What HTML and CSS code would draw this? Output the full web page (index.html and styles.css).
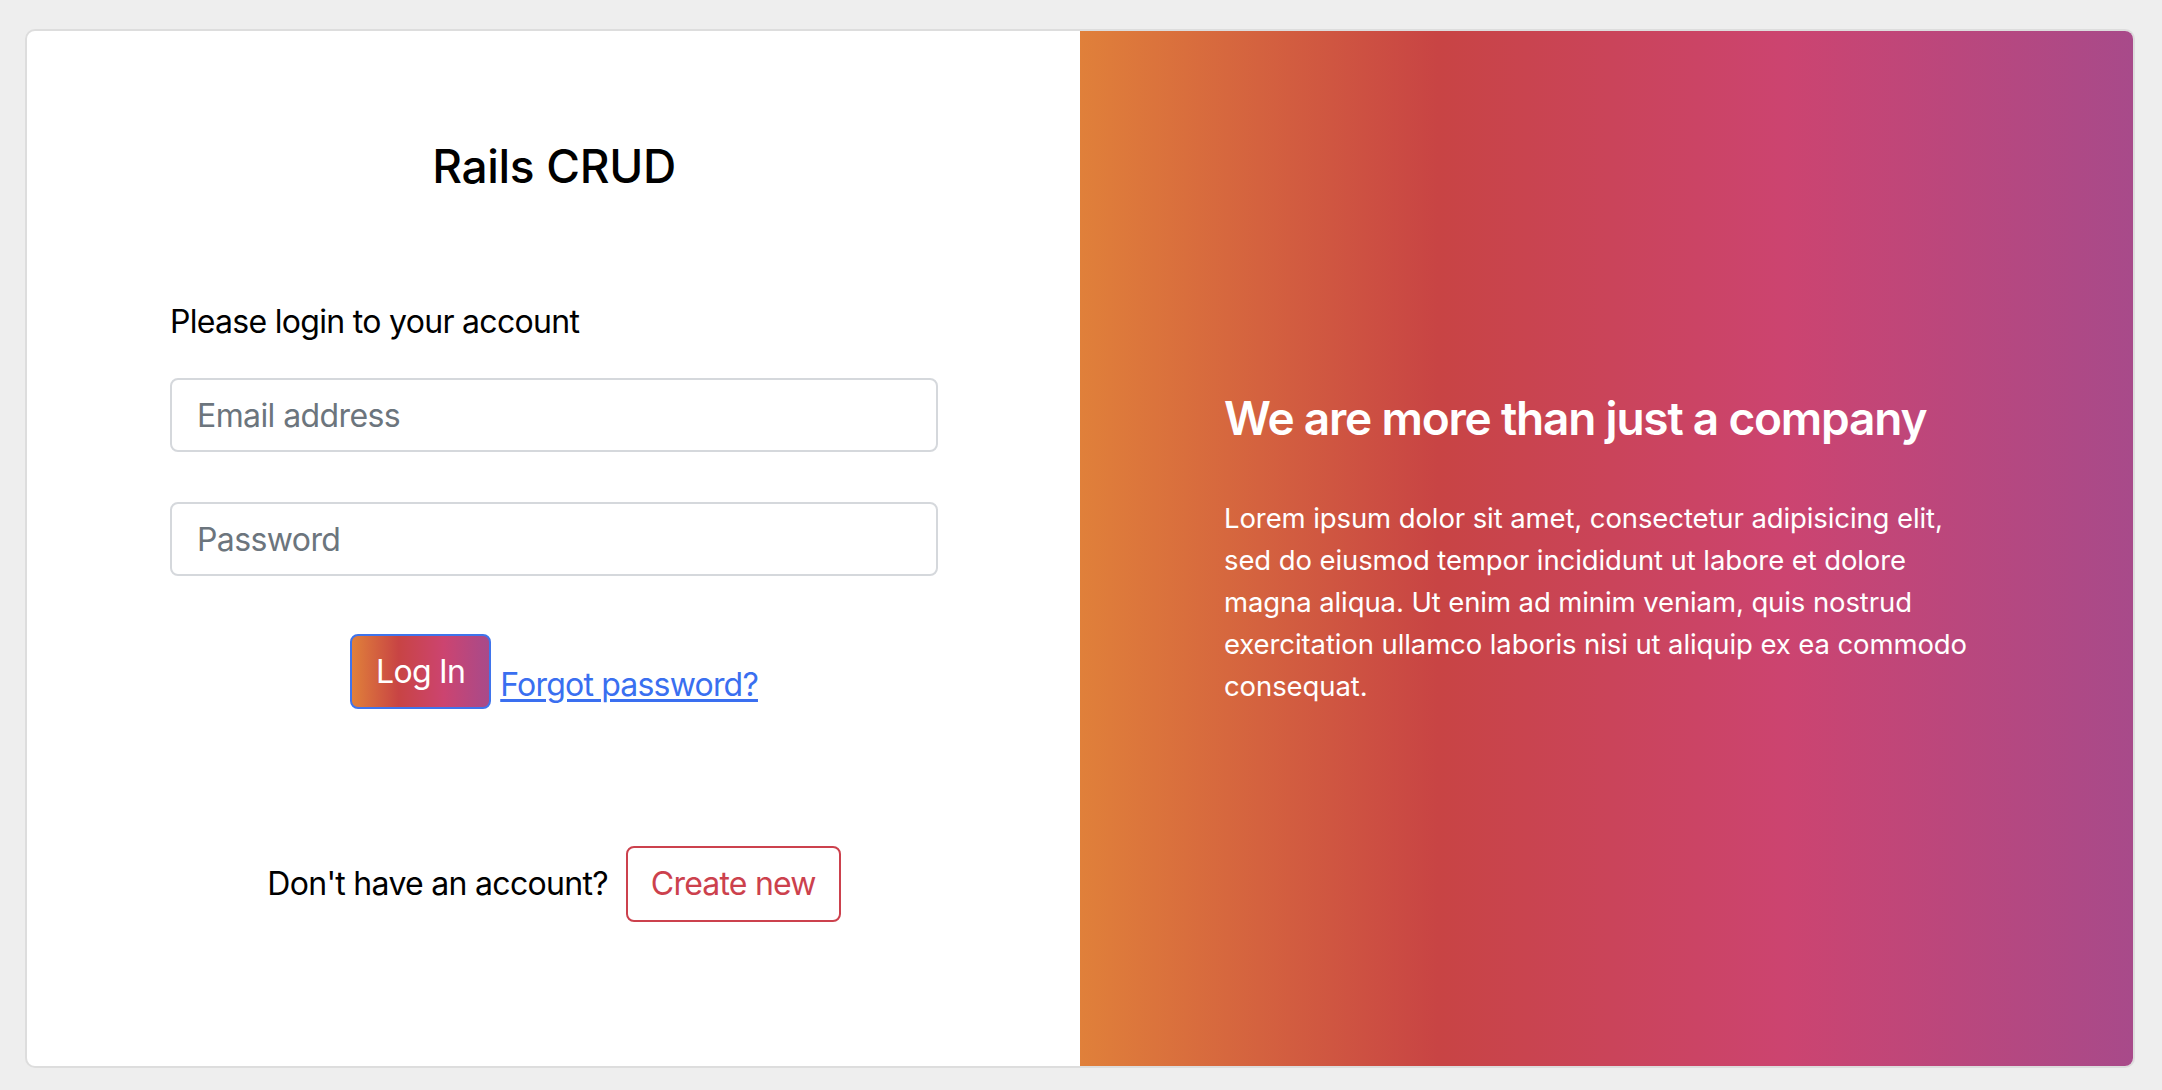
FILE: index.html
```html
<!DOCTYPE html>
<html lang="en">
<head>
<meta charset="utf-8">
<title>Rails CRUD</title>
<link rel="stylesheet" href="styles.css">
</head>
<body>
<main class="page">
  <div class="card">
    <section class="login">
      <h4 class="brand">Rails CRUD</h4>
      <form class="form">
        <p class="lead">Please login to your account</p>
        <input class="field" type="email" placeholder="Email address">
        <input class="field" type="password" placeholder="Password">
        <div class="actions">
          <button class="btn-login" type="button">Log In</button>
          <a class="forgot" href="#">Forgot password?</a>
        </div>
        <div class="signup">
          <p class="signup-text">Don't have an account?</p>
          <button class="btn-create" type="button">Create new</button>
        </div>
      </form>
    </section>
    <section class="promo">
      <div class="promo-inner">
        <h4 class="promo-title">We are more than just a company</h4>
        <p class="promo-text">Lorem ipsum dolor sit amet, consectetur adipisicing elit, sed do eiusmod tempor incididunt ut labore et dolore magna aliqua. Ut enim ad minim veniam, quis nostrud exercitation ullamco laboris nisi ut aliquip ex ea commodo consequat.</p>
      </div>
    </section>
  </div>
</main>
</body>
</html>
```

FILE: styles.css
```css
* { box-sizing: border-box; }
html, body { margin: 0; height: 100%; }
body {
  background: #eeeeee;
  font-family: Inter, "Noto Sans", "Liberation Sans", sans-serif;
  color: #000;
}
.page {
  padding: 29px 27px 0 25px;
}
.card {
  display: grid;
  grid-template-columns: 1fr 1fr;
  background: #fff;
  border: 2px solid #dddddd;
  border-radius: 10px;
  overflow: hidden;
}
.login {
  padding: 100px 142px 144px 143px;
}
.brand {
  margin: 8px 0 0;
  padding-bottom: 8px;
  margin-bottom: 96px;
  text-align: center;
  font-size: 46px;
  line-height: 1.2;
  font-weight: 500;
  letter-spacing: -0.3px;
}
.form { display: flex; flex-direction: column; }
.lead {
  margin: 0 0 32px;
  font-size: 32px;
  line-height: 48px;
  letter-spacing: -0.7px;
}
.field {
  display: block;
  width: 100%;
  height: 74px;
  padding: 12px 25px;
  border: 2px solid #d5d8dc;
  border-radius: 8px;
  font-family: inherit;
  font-size: 32px;
  letter-spacing: -0.6px;
  color: #212529;
  margin-bottom: 50px;
  outline: none;
  background: #fff;
}
.field::placeholder { color: #6c757d; }
.field + .field { margin-bottom: 58px; }
.actions {
  display: flex;
  justify-content: center;
  align-items: flex-end;
  gap: 9px;
}
.btn-login {
  height: 75px;
  padding: 0 24px;
  border: 2px solid #3f74ec;
  border-radius: 8px;
  background: linear-gradient(to right, #e0803a 0%, #c84444 34%, #cc4470 67%, #a84a8a 100%);
  color: #fff;
  font-family: inherit;
  font-size: 32px;
  letter-spacing: -0.7px;
  line-height: 48px;
}
.forgot {
  color: #3a6ff0;
  font-size: 32px;
  letter-spacing: -0.8px;
  line-height: 48px;
  text-decoration: underline;
  text-underline-offset: 3px;
}
.signup {
  display: flex;
  justify-content: center;
  align-items: center;
  gap: 18px;
  margin-top: 137px;
}
.signup-text {
  margin: 0;
  font-size: 32px;
  letter-spacing: -0.7px;
  line-height: 48px;
}
.btn-create {
  height: 76px;
  padding: 0 23px;
  border: 2px solid #cc414d;
  border-radius: 8px;
  background: #fff;
  color: #cc414d;
  font-family: inherit;
  font-size: 32px;
  letter-spacing: -0.8px;
  line-height: 48px;
}
.promo {
  display: flex;
  align-items: center;
  background: linear-gradient(to right, #e0803a 0%, #c84444 34%, #cc4470 67%, #a84a8a 100%);
  color: #fff;
  padding: 96px 142px 96px 144px;
}
.promo-title {
  margin: 0 0 51px;
  font-size: 46px;
  line-height: 1.2;
  font-weight: 600;
  letter-spacing: -1.2px;
}
.promo-text {
  margin: 0;
  font-size: 27.5px;
  letter-spacing: -0.1px;
  line-height: 42px;
}
```
